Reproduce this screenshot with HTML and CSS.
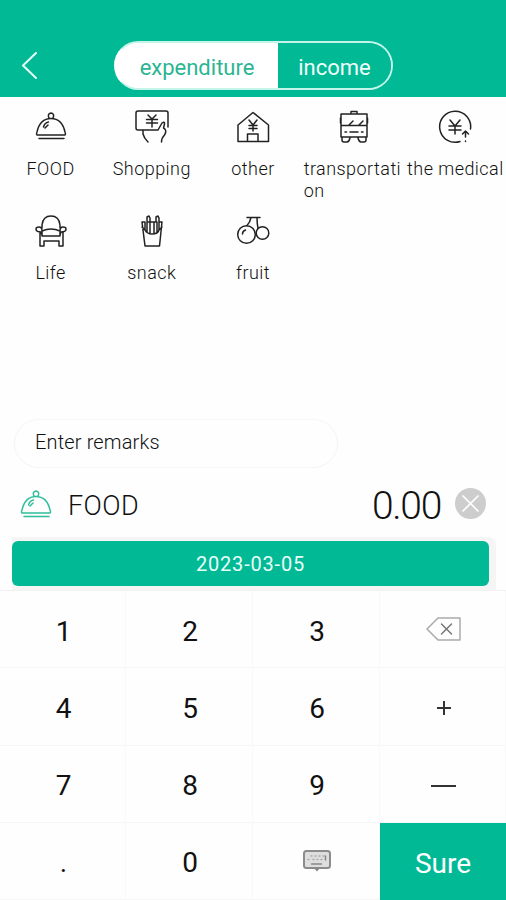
FILE: index.html
```html
<!DOCTYPE html>
<html lang="en">
<head>
    <meta charset="UTF-8">
    <meta name="viewport" content="width=device-width, initial-scale=1.0">
    <title>Add record</title>
    <link rel="stylesheet" href="styles.css">
</head>
<body>
    <header class="header">
        <svg class="back" width="18" height="28" viewBox="0 0 18 28"><path d="M16 2 3 14.500 16 27"/></svg>
        <div class="tabs">
            <div class="tab active">expenditure</div>
            <div class="tab">income</div>
        </div>
    </header>

    <main class="categories">
        <div class="category">
            <svg class="icon" viewBox="0 0 36 36"><path d="M4 27q-1-1 0-3C6 15 11 10.500 18 10.500S30 15 32 24q1 2 0 3zM6 30.500h25M16 10q-2-4 2-5 4 1 2 5M10.500 19q1-4 5-5M12 20l3-3"/></svg>
            <span>FOOD</span>
        </div>
        <div class="category">
            <svg class="icon" viewBox="0 0 36 36"><path d="M24 22H4q-2 0-2-2V5q0-2 2-2h28q2 0 2 2v14M14 7l4 4 4-4M12.500 11.500h11M12.500 15h11M18 11v8M9 22v4q1 4 5 8M24 22l4-7q3-2 2.500 1l-1 4q4 2 1 7-3 3-3 7"/></svg>
            <span>Shopping</span>
        </div>
        <div class="category">
            <svg class="icon" viewBox="0 0 36 36"><path d="M3 33.500V17L18 4.500 33.500 17v16.500zM12.500 33.500V26H23v7.500M14 12l4 5 4-5M14 17.500h8M14 20.500h8M18 17v6"/></svg>
            <span>other</span>
        </div>
        <div class="category">
            <svg class="icon" viewBox="0 0 36 36"><path d="M5 6h26v23H5zM5 17.500h26M15 5V3.500h6V5M4.500 10v5M31.500 10v5M13 17l4-4M23 17l4-4M9 24h1.500M14 24h8M25.500 24H27M6 29v3q0 2 2 2h3q2 0 3-4M22 30q1 4 3 4h3q2 0 2-2v-3"/></svg>
            <span>transportation</span>
        </div>
        <div class="category">
            <svg class="icon" viewBox="0 0 36 36"><path d="M23 33.500A15.500 15.500 0 1 1 33.500 21M13 12l5 6 5-6M12 18h12M12 22h12M18 18v8M28.500 33v.5M28.500 29v-6M25.500 26l3-3 3 3"/></svg>
            <span>the medical</span>
        </div>
        <div class="category">
            <svg class="icon" viewBox="0 0 36 36"><path d="M9 16v-3q1-9 9-9t9 9v3M9 24v-5q9-4 18 0v5zM9 23l-1-3q-5 0-5-3 0-2 3-2 3 0 3 4M27 23l1-3q5 0 5-3 0-2-3-2-3 0-3 4M7 20v14h4v-5h15v5h4V20"/></svg>
            <span>Life</span>
        </div>
        <div class="category">
            <svg class="icon" viewBox="0 0 36 36"><path d="M8 10l3 24h14.500L28 10h-3v8q-1 4-7 4-5 0-7-4v-8zM13 20V10h3v11M13 9V5l2-1 1 2v4M20 21V10h3v10M22 9V5l2-1 1 2v4M16 10h4M11 18l-3-3M25 18l3-3"/></svg>
            <span>snack</span>
        </div>
        <div class="category">
            <svg class="icon" viewBox="0 0 36 36"><circle cx="11.500" cy="22.500" r="8.800"/><circle cx="27.500" cy="21" r="6.300"/><path d="M12 5.500h13M16 5.500q-1 5-4 8M22 5.500q0 6 1 11M7.500 22q0-3 3-4"/></svg>
            <span>fruit</span>
        </div>
    </main>

    <div class="remarks">Enter remarks</div>

    <section class="record">
        <svg class="icon icon-green" viewBox="0 0 36 36"><path d="M4 27q-1-1 0-3C6 15 11 10.500 18 10.500S30 15 32 24q1 2 0 3zM6 30.500h25M16 10q-2-4 2-5 4 1 2 5M10.500 19q1-4 5-5M12 20l3-3"/></svg>
        <span class="record-name">FOOD</span>
        <span class="amount">0.00</span>
        <svg class="clear" width="31" height="31" viewBox="0 0 31 31"><circle cx="15.500" cy="15.500" r="15.500"/><path d="m8 8 15 15M23 8 8 23"/></svg>
    </section>

    <div class="date-wrap">
        <div class="date">2023-03-05</div>
    </div>

    <section class="keypad">
        <div class="key">1</div>
        <div class="key">2</div>
        <div class="key">3</div>
        <div class="key"><svg class="key-delete" width="36" height="24" viewBox="0 0 36 24"><path d="M12 1h22v22H12L1 12z"/><path class="cross" d="m15.500 7 10 10M25.500 7l-10 10"/></svg></div>
        <div class="key">4</div>
        <div class="key">5</div>
        <div class="key">6</div>
        <div class="key"><svg class="key-sign" width="14" height="14" viewBox="0 0 14 14"><path d="M0 7h14M7 0v14"/></svg></div>
        <div class="key">7</div>
        <div class="key">8</div>
        <div class="key">9</div>
        <div class="key"><svg class="key-sign" width="25" height="14" viewBox="0 0 25 14"><path d="M0 7h25"/></svg></div>
        <div class="key">.</div>
        <div class="key">0</div>
        <div class="key"><svg class="key-board" width="28" height="22" viewBox="0 0 28 22"><rect x="1" y="1" width="26" height="17" rx="2.500"/><path class="dots" d="M8 6h1M12 6h1M16 6h1M20 6h1M5 9.500h1M10 9.500h1M14 9.500h1M18 9.500h1"/><path d="M22.500 6v4M8.500 14h10"/><path class="tip" d="M11 18h6l-3 3.500z"/></svg></div>
        <div class="key sure">Sure</div>
    </section>
</body>
</html>
```
FILE: styles.css
```css
* {
    box-sizing: border-box;
}

body {
    margin: 0;
    height: 900px;
    display: flex;
    flex-direction: column;
    overflow: hidden;
    font-family: Roboto, "Liberation Sans", sans-serif;
    background-color: #fefefe;
    color: #111;
}

svg {
    display: block;
    flex: none;
    fill: none;
    stroke-linecap: round;
    stroke-linejoin: round;
}

/* Top bar */
.header {
    height: 97px;
    padding: 41px 0 0 20px;
    display: flex;
    align-items: flex-start;
    background: #02b995;
}

.back {
    margin-top: 10px;
    stroke: #e8fff9;
    stroke-width: 2;
}

.tabs {
    display: flex;
    width: 279px;
    height: 49px;
    margin-left: 76px;
    border: 2px solid #c5f5ea;
    border-left-color: #fff;
    border-radius: 25px;
    overflow: hidden;
    background: linear-gradient(to right, #fff 50%, #02b995 50%);
}

.tab {
    flex: 1;
    padding-top: 3px;
    display: flex;
    align-items: center;
    justify-content: center;
    color: #f0fffb;
    background: #02b995;
    font-size: 22px;
}

.tab.active {
    flex: 0 0 162px;
    background: #fff;
    color: #2bb592;
}

/* Categories */
.categories {
    height: 322px;
    padding-top: 11px;
    display: grid;
    grid-template-columns: repeat(5, 1fr);
    grid-auto-rows: 104px;
    align-content: start;
}

.category {
    display: flex;
    flex-direction: column;
    align-items: center;
    gap: 14px;
    font-size: 18px;
    font-weight: 300;
    line-height: 21.5px;
    letter-spacing: 0.45px;
    word-break: break-all;
}

.category span {
    max-width: 101px;
}

.icon {
    width: 36px;
    height: 36px;
    stroke: #222;
    stroke-width: 1.5;
}

.icon-green {
    stroke: #2fbd9b;
}

/* Remarks and current record */
.remarks {
    width: 324px;
    height: 49px;
    margin-left: 14px;
    padding: 10px 0 0 20px;
    border: 1.5px solid #f5f5f5;
    border-radius: 25px;
    font-size: 20px;
    font-weight: 300;
    line-height: 24px;
    letter-spacing: 0.15px;
}

.record {
    height: 69px;
    padding: 2px 20px 0 18px;
    display: flex;
    align-items: center;
}

.record-name {
    margin: 5px 0 0 14px;
    font-size: 27px;
    font-weight: 300;
    letter-spacing: 0.4px;
}

.amount {
    margin: 5px 14px 0 auto;
    font-size: 39px;
    font-weight: 300;
    letter-spacing: -1.3px;
}

.clear circle {
    fill: #cdcdcd;
}

.clear path {
    stroke: #fff;
    stroke-width: 1.7;
}

.date-wrap {
    width: 484px;
    height: 53px;
    margin-left: 12px;
    padding: 4px 7px 3px 0;
    background: #f5f5f5;
    border-top-right-radius: 8px;
}

.date {
    height: 45px;
    display: flex;
    align-items: center;
    justify-content: center;
    border-radius: 6px;
    background: #02b995;
    color: #e8fff9;
    font-size: 20px;
    letter-spacing: 0.8px;
}

/* Keypad */
.keypad {
    flex: 1;
    display: grid;
    grid-template-columns: 126px 127px 127px 126px;
    grid-template-rows: repeat(4, 1fr);
    border-top: 1px solid #f2f0f0;
}

.key {
    display: flex;
    align-items: center;
    justify-content: center;
    padding: 4px 0 0 2px;
    border-right: 1px solid #f9f9f9;
    border-bottom: 1px solid #f6f6f6;
    font-size: 28px;
}

.key-delete {
    margin-top: -4px;
    stroke: #aaa;
    stroke-width: 1.5;
}

.key-delete .cross {
    stroke: #777;
}

.key-sign {
    stroke: #333;
    stroke-width: 2;
    stroke-linecap: butt;
}

.key-board {
    margin-top: -3px;
    stroke: #888;
    stroke-width: 1.5;
}

.key-board rect {
    fill: #dedede;
    stroke: #8c8c8c;
    stroke-width: 2;
}

.key-board .dots {
    stroke: #aaa;
}

.key-board .tip {
    fill: #888;
    stroke: none;
}

.sure {
    padding-left: 0;
    border: none;
    background: #02b995;
    color: #fff;
}
```
